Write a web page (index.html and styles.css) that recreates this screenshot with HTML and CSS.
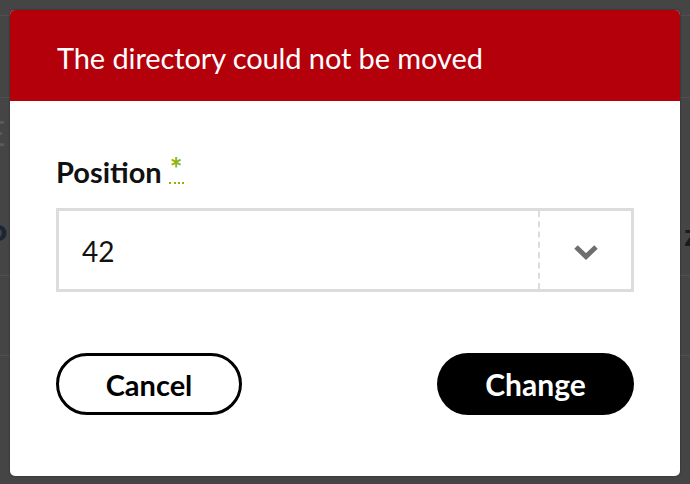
FILE: index.html
```html
<!DOCTYPE html>
<html lang="en">
<head>
<meta charset="utf-8">
<title>Move directory</title>
<link rel="stylesheet" href="styles.css">
</head>
<body>
<div class="page">
  <div class="page-row r1"></div>
  <div class="page-row r2"></div>
  <div class="page-row r3"><span class="ghost-left light">E</span></div>
  <div class="page-row r4"><span class="ghost-left">P</span><span class="ghost-right">z</span></div>
  <div class="page-row r5"></div>
</div>
<div class="overlay">
  <div class="modal" role="dialog" aria-labelledby="modal-title">
    <header class="modal-header">
      <h1 id="modal-title" class="modal-title">The directory could not be moved</h1>
    </header>
    <div class="modal-body">
      <label class="field-label" for="position">Position <abbr class="required" title="required">*</abbr></label>
      <div class="select">
        <span class="select-value">42</span>
        <span class="select-arrow">
          <svg width="26" height="16" viewBox="0 0 26 16" aria-hidden="true"><polyline points="3,3 13,12.5 23,3" fill="none" stroke="#6e6e6e" stroke-width="5" stroke-linejoin="miter" stroke-linecap="butt"/></svg>
        </span>
      </div>
      <div class="actions">
        <button class="btn btn-outline" type="button">Cancel</button>
        <button class="btn btn-solid" type="button">Change</button>
      </div>
    </div>
  </div>
</div>
</body>
</html>
```
FILE: styles.css
```css
* { box-sizing: border-box; }
html, body { margin: 0; padding: 0; }
body {
  width: 690px;
  height: 484px;
  overflow: hidden;
  background: #454545;
  font-family: "Lato", "Open Sans", sans-serif;
  position: relative;
}
.page { display: flex; flex-direction: column; }
.page-row {
  border-bottom: 1px solid #4f4f4f;
  display: flex;
  justify-content: space-between;
  align-items: center;
  overflow: hidden;
}
.r1 { height: 16px; }
.r2 { height: 82px; }
.r3 { height: 178px; align-items: flex-start; padding-top: 14px; }
.r4 { align-items: flex-start; margin-top: -60px; height: 140px; }
.r5 { height: 128px; border-bottom: none; }
.ghost-left { font-size: 34px; font-weight: 700; color: #1c2733; margin-left: -14px; }
.ghost-left.light { color: #5a5a5a; font-weight: 400; }
.ghost-right { font-size: 30px; font-weight: 700; color: #1a1a1a; margin-right: -8px; }

.overlay {
  position: absolute;
  inset: 0;
  padding: 10px;
}
.modal {
  width: 670px;
  height: 466px;
  background: #fff;
  border-radius: 5px;
  overflow: hidden;
  box-shadow: 0 0 2px rgba(0,0,0,0.5);
  display: flex;
  flex-direction: column;
}
.modal-header {
  background: #b3000b;
  height: 91px;
  display: flex;
  align-items: center;
  padding: 0 47px;
}
.modal-title {
  margin: 0;
  color: #fff;
  font-size: 29px;
  font-weight: 400;
  letter-spacing: -0.1px;
  line-height: 1;
  padding-top: 3px;
}
.modal-body {
  padding: 56px 46px 0 46px;
  display: flex;
  flex-direction: column;
}
.field-label {
  font-size: 29px;
  font-weight: 700;
  color: #111;
  letter-spacing: 0;
  line-height: 1;
  display: flex;
  align-items: flex-start;
  gap: 7px;
}
.required {
  color: #8db20c;
  text-decoration: none;
  border-bottom: 2px dotted #8db20c;
  font-size: 30px;
  line-height: 22px;
  height: 27px;
  padding: 0 1px;
  font-weight: 700;
}
.select {
  margin-top: 22px;
  height: 84px;
  border: 3px solid #dcdcdc;
  display: flex;
  align-items: stretch;
}
.select-value {
  flex: 1;
  display: flex;
  align-items: center;
  padding-left: 23px;
  font-size: 28px;
  color: #111;
  padding-top: 2px;
}
.select-arrow {
  width: 93px;
  border-left: 2px dashed #dcdcdc;
  display: flex;
  align-items: center;
  justify-content: center;
  padding-top: 4px;
}
.actions {
  margin-top: 61px;
  display: flex;
  justify-content: space-between;
}
.btn {
  height: 62px;
  border-radius: 31px;
  font-family: "Lato", "Open Sans", sans-serif;
  font-size: 29px;
  font-weight: 700;
  letter-spacing: 0;
  padding: 0;
  cursor: pointer;
}
.btn-outline {
  width: 186px;
  background: #fff;
  border: 3px solid #000;
  color: #000;
}
.btn-solid {
  width: 197px;
  background: #000;
  border: none;
  color: #fff;
  font-size: 30px;
}
```
